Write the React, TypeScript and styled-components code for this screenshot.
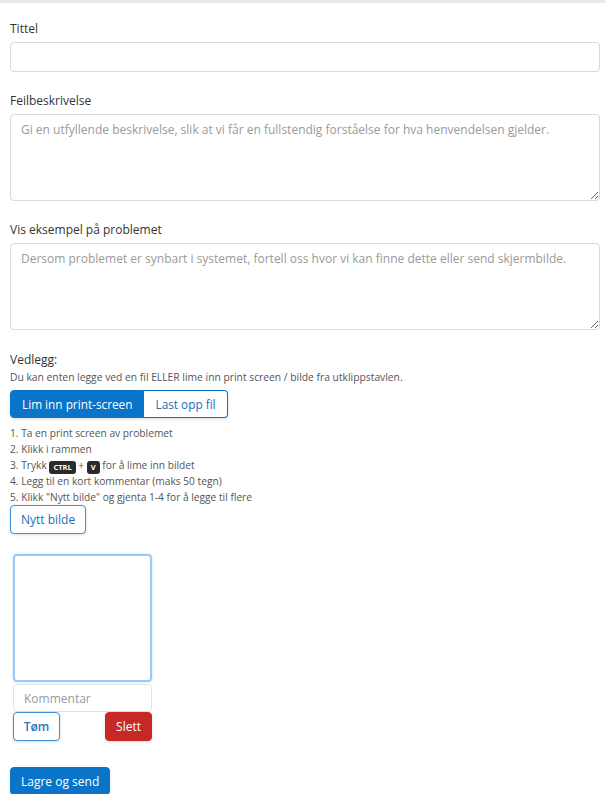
import React, { useState } from 'react';
import styled, { createGlobalStyle } from 'styled-components';

const GlobalStyle = createGlobalStyle`
  body {
    margin: 0;
    background: #fff;
    font-family: "Open Sans", "Noto Sans", sans-serif;
    color: #333;
  }
  * { box-sizing: border-box; }
`;

const steps = [
  'Ta en print screen av problemet',
  'Klikk i rammen',
  null,
  'Legg til en kort kommentar (maks 50 tegn)',
  'Klikk "Nytt bilde" og gjenta 1-4 for å legge til flere',
];

const App: React.FC = () => {
  const [mode, setMode] = useState<'paste' | 'upload'>('paste');

  return (
    <>
      <GlobalStyle />
      <Page>
        <Form>
          <Label>Tittel</Label>
          <TextInput type="text" />

          <Label $gap>Feilbeskrivelse</Label>
          <TextArea placeholder="Gi en utfyllende beskrivelse, slik at vi får en fullstendig forståelse for hva henvendelsen gjelder." />

          <Label $gap>Vis eksempel på problemet</Label>
          <TextArea placeholder="Dersom problemet er synbart i systemet, fortell oss hvor vi kan finne dette eller send skjermbilde." />

          <AttachTitle>Vedlegg:</AttachTitle>
          <Hint>Du kan enten legge ved en fil ELLER lime inn print screen / bilde fra utklippstavlen.</Hint>

          <ToggleGroup>
            <ToggleButton $active={mode === 'paste'} onClick={() => setMode('paste')}>
              Lim inn print-screen
            </ToggleButton>
            <ToggleButton $active={mode === 'upload'} onClick={() => setMode('upload')}>
              Last opp fil
            </ToggleButton>
          </ToggleGroup>

          <Steps>
            {steps.map((step, i) => (
              <Step key={i}>
                {i + 1}.{' '}
                {step ?? (
                  <>
                    Trykk <Kbd>CTRL</Kbd> + <Kbd>V</Kbd> for å lime inn bildet
                  </>
                )}
              </Step>
            ))}
          </Steps>

          <OutlineButton>Nytt bilde</OutlineButton>

          <PasteCard>
            <PasteArea tabIndex={0} />
            <CommentInput placeholder="Kommentar" />
            <CardActions>
              <SmallOutline>Tøm</SmallOutline>
              <DangerButton>Slett</DangerButton>
            </CardActions>
          </PasteCard>

          <PrimaryButton>Lagre og send</PrimaryButton>
        </Form>
      </Page>
    </>
  );
};

// Styled Components
const Page = styled.div`
  border-top: 3px solid #e9e9e9;
  min-height: 794px;
`;

const Form = styled.div`
  padding: 18px 5px 0 10px;
  display: flex;
  flex-direction: column;
  align-items: flex-start;
`;

const Label = styled.label<{ $gap?: boolean }>`
  display: block;
  font-size: 12px;
  line-height: 16px;
  color: #333;
  margin: ${p => (p.$gap ? '21px' : '0')} 0 5px;
`;

const fieldBase = `
  width: 100%;
  border: 1px solid #d9d9d9;
  border-radius: 4px;
  font-family: "Open Sans", "Noto Sans", sans-serif;
  font-size: 12px;
  color: #333;
  background: #fff;
  outline: none;
  &::placeholder { color: #9a9a9a; }
`;

const TextInput = styled.input`
  ${fieldBase}
  height: 30px;
  padding: 4px 10px;
`;

const TextArea = styled.textarea`
  ${fieldBase}
  height: 87px;
  padding: 7px 10px;
  line-height: 16px;
  resize: vertical;
`;

const AttachTitle = styled.div`
  font-size: 12px;
  line-height: 17px;
  margin-top: 21px;
`;

const Hint = styled.div`
  font-size: 10.3px;
  line-height: 14px;
  color: #555;
  margin-top: 2px;
`;

const ToggleGroup = styled.div`
  display: flex;
  margin-top: 6px;
  border-radius: 4px;
  box-shadow: 0 1px 3px rgba(0, 0, 0, 0.15);
`;

const ToggleButton = styled.button<{ $active: boolean }>`
  height: 28px;
  padding: 0 11px;
  font-family: "Open Sans", "Noto Sans", sans-serif;
  font-size: 11.8px;
  border: 1px solid #0a74c9;
  background: ${p => (p.$active ? '#0a74c9' : '#fff')};
  color: ${p => (p.$active ? '#fff' : '#1a6fb5')};
  cursor: pointer;
  &:first-child { border-radius: 4px 0 0 4px; }
  &:last-child { border-radius: 0 4px 4px 0; border-left: none; }
`;

const Steps = styled.ol`
  list-style: none;
  margin: 7px 0 0;
  padding: 0;
`;

const Step = styled.li`
  font-size: 10.2px;
  line-height: 16px;
  height: 16px;
  color: #555;
`;

const Kbd = styled.kbd`
  display: inline-block;
  background: #2b2b2b;
  color: #fff;
  font-family: "Open Sans", "Noto Sans", sans-serif;
  font-size: 7.5px;
  font-weight: 700;
  line-height: 13px;
  padding: 0 4px;
  border-radius: 3px;
  vertical-align: -1px;
`;

const OutlineButton = styled.button`
  height: 29px;
  padding: 0 10px;
  font-family: "Open Sans", "Noto Sans", sans-serif;
  font-size: 12px;
  color: #1a6fb5;
  background: #fff;
  border: 1px solid #3f8fd2;
  border-radius: 4px;
  box-shadow: 0 1px 3px rgba(0, 0, 0, 0.15);
`;

const PasteCard = styled.div`
  width: 139px;
  margin: 20px 0 0 3px;
  display: flex;
  flex-direction: column;
`;

const PasteArea = styled.div`
  height: 128px;
  border: 2px solid #9ccaf2;
  border-radius: 4px;
  box-shadow: 0 0 2px rgba(100, 170, 230, 0.5);
  outline: none;
`;

const CommentInput = styled.input`
  ${fieldBase}
  margin-top: 2px;
  height: 28px;
  padding: 4px 10px;
  border-color: #e2e2e2;
`;

const CardActions = styled.div`
  display: flex;
  justify-content: space-between;
`;

const SmallOutline = styled.button`
  height: 29px;
  width: 47px;
  font-family: "Open Sans", "Noto Sans", sans-serif;
  font-size: 12px;
  font-weight: 600;
  color: #2a78b8;
  background: #fff;
  border: 1px solid #3f8fd2;
  border-radius: 4px;
  box-shadow: 0 1px 3px rgba(0, 0, 0, 0.15);
`;

const DangerButton = styled.button`
  height: 29px;
  width: 47px;
  font-family: "Open Sans", "Noto Sans", sans-serif;
  font-size: 12px;
  color: #fff;
  background: #c62828;
  border: 1px solid #c62828;
  border-radius: 4px;
  box-shadow: 0 1px 3px rgba(0, 0, 0, 0.15);
`;

const PrimaryButton = styled.button`
  margin-top: 26px;
  height: 28px;
  padding: 0 10px;
  font-family: "Open Sans", "Noto Sans", sans-serif;
  font-size: 12px;
  color: #fff;
  background: #0a74c9;
  border: 1px solid #0a74c9;
  border-radius: 4px;
  box-shadow: 0 1px 3px rgba(0, 0, 0, 0.15);
`;

export default App;
